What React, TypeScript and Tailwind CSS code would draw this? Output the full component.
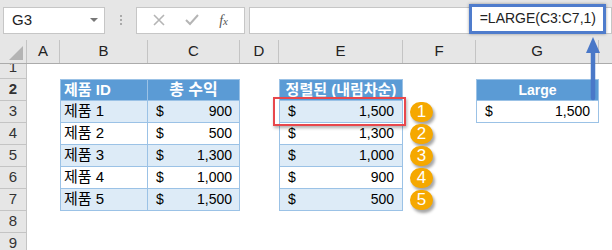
import React from "react";

const COLS = [
  { key: "A", w: "w-[33px]" },
  { key: "B", w: "w-[88px]" },
  { key: "C", w: "w-[92px]" },
  { key: "D", w: "w-[39px]" },
  { key: "E", w: "w-[124px]" },
  { key: "F", w: "w-[73px]" },
  { key: "G", w: "w-[123px]" },
  { key: "", w: "w-[20px]" },
];

const products = [
  { name: "제품 1", rev: "900", sorted: "1,500" },
  { name: "제품 2", rev: "500", sorted: "1,300" },
  { name: "제품 3", rev: "1,300", sorted: "1,000" },
  { name: "제품 4", rev: "1,000", sorted: "900" },
  { name: "제품 5", rev: "1,500", sorted: "500" },
];

const RowHead = ({ n }: { n: number }) => (
  <div className="flex h-full w-[27px] shrink-0 items-center justify-center border-r border-b border-[#c4c4c4] bg-[#e6e6e6] text-[15px] text-[#333]">
    {n}
  </div>
);

const Money = ({ value, fill, cls = "" }: { value: string; fill: boolean; cls?: string }) => (
  <div
    className={`flex h-full items-center justify-between border-r border-b border-[#9bc2e6] pr-[7px] pl-[8px] ${
      fill ? "bg-[#ddebf7]" : "bg-white"
    } ${cls}`}
  >
    <span>$</span>
    <span>{value}</span>
  </div>
);

const Badge = ({ n }: { n: number }) => (
  <div className="absolute top-[1px] left-[7px] flex h-[20px] w-[23px] items-center justify-center rounded-full bg-[#f5a800] text-[17px] text-white shadow-[2px_3px_3px_rgba(0,0,0,0.35)]">
    {n}
  </div>
);

export default function App() {
  return (
    <div className="relative h-[250px] w-[612px] overflow-hidden bg-white font-['Liberation_Sans','Noto_Sans_CJK_KR',sans-serif] text-[14px] text-black">
      {/* formula bar */}
      <div className="flex h-[40px] items-center bg-[#e6e6e6] pl-[3px]">
        <div className="relative flex h-[27px] w-[102px] items-center border border-[#c6c6c6] bg-white pl-[8px] text-[15px] text-[#222]">
          G3
          <span className="absolute top-[10px] right-[6px] h-0 w-0 border-x-[4px] border-t-[4px] border-x-transparent border-t-[#777]" />
        </div>
        <div className="flex w-[31px] flex-col items-center gap-[2px]">
          <span className="h-[2px] w-[2px] bg-[#aaa]" />
          <span className="h-[2px] w-[2px] bg-[#aaa]" />
          <span className="h-[2px] w-[2px] bg-[#aaa]" />
        </div>
        <div className="flex h-[27px] w-[109px] items-center justify-around border border-[#c6c6c6] bg-white px-[6px]">
          <svg width="12" height="12" viewBox="0 0 12 12">
            <path d="M1 1L11 11M11 1L1 11" stroke="#b5b5b5" strokeWidth="1.6" />
          </svg>
          <svg width="14" height="12" viewBox="0 0 14 12">
            <path d="M1 6L5 10L13 1" stroke="#b5b5b5" strokeWidth="2" fill="none" />
          </svg>
          <span className="font-['Liberation_Serif',serif] text-[14px] italic text-[#555]">
            f<span className="text-[11px]">x</span>
          </span>
        </div>
        <div className="relative ml-[4px] h-[27px] flex-1 border border-[#c6c6c6] bg-white">
          <div className="absolute top-[-4px] left-[219px] flex h-[30px] w-[137px] items-center justify-end border-[3px] border-[#4f7ccc] bg-white pr-[7px] text-[14px] text-[#222] shadow-[0_0_3px_rgba(0,0,0,0.35)]">
            =LARGE(C3:C7,1)
          </div>
        </div>
      </div>

      {/* column headers */}
      <div className="flex h-[24px] border-b border-[#ababab] bg-[#e6e6e6] text-[15px] text-[#222]">
        <div className="relative w-[27px] shrink-0 border-r border-[#c4c4c4]">
          <span className="absolute right-[3px] bottom-[3px] h-0 w-0 border-b-[14px] border-l-[14px] border-b-[#b4b4b4] border-l-transparent" />
        </div>
        {COLS.map((c) => (
          <div key={c.key} className={`${c.w} flex shrink-0 items-center justify-center border-r border-[#c4c4c4]`}>
            {c.key}
          </div>
        ))}
      </div>

      {/* row 1 (its top is hidden under the header) */}
      <div className="flex h-[15px] overflow-hidden">
        <div className="mt-[-7px] flex h-[22px] w-[27px] items-center justify-center border-r border-b border-[#c4c4c4] bg-[#e6e6e6] text-[15px] text-[#333]">
          1
        </div>
      </div>

      {/* row 2 : headers */}
      <div className="flex h-[22px] font-bold text-white">
        <RowHead n={2} />
        <div className="w-[33px] shrink-0" />
        <div className="flex w-[88px] shrink-0 items-center border-y border-r border-l border-[#9bc2e6] bg-[#5b9bd5] pl-[3px] text-[15px]">
          제품 ID
        </div>
        <div className="flex w-[92px] shrink-0 items-center justify-center border-y border-r border-[#9bc2e6] bg-[#5b9bd5] text-[16px]">
          총 수익
        </div>
        <div className="w-[39px] shrink-0" />
        <div className="flex w-[124px] shrink-0 items-center justify-center border border-[#9bc2e6] bg-[#5b9bd5] text-[15px]">
          정렬된 (내림차순)
        </div>
        <div className="w-[73px] shrink-0" />
        <div className="flex w-[123px] shrink-0 items-center justify-center border border-[#9bc2e6] bg-[#5b9bd5]">
          Large
        </div>
      </div>

      {/* rows 3-7 */}
      {products.map((p, i) => {
        const fill = i % 2 === 0;
        return (
          <div key={p.name} className="flex h-[22px]">
            <RowHead n={i + 3} />
            <div className="w-[33px] shrink-0" />
            <div
              className={`flex w-[88px] shrink-0 items-center border-r border-b border-l border-[#9bc2e6] pl-[3px] text-[15px] ${
                fill ? "bg-[#ddebf7]" : "bg-white"
              }`}
            >
              {p.name}
            </div>
            <div className="w-[92px] shrink-0">
              <Money value={p.rev} fill={fill} />
            </div>
            <div className="w-[39px] shrink-0" />
            <div className="relative w-[124px] shrink-0">
              <Money value={p.sorted} fill={fill} cls="border-l pr-[8px]" />
              {i === 0 && (
                <div className="absolute top-[-4px] left-[-6px] z-10 h-[29px] w-[133px] border-[2.5px] border-[#e8474c] shadow-[1px_2px_3px_rgba(0,0,0,0.3)]" />
              )}
            </div>
            <div className="relative w-[73px] shrink-0">
              <Badge n={i + 1} />
            </div>
            {i === 0 && (
              <div className="w-[123px] shrink-0">
                <Money value="1,500" fill={false} cls="border-l pr-[8px]" />
              </div>
            )}
          </div>
        );
      })}

      {/* rows 8-9 */}
      {[8, 9].map((n) => (
        <div key={n} className="flex h-[22px]">
          <RowHead n={n} />
        </div>
      ))}

      {/* arrow from G2 up to the formula */}
      <svg className="absolute top-[34px] left-[584px]" width="18" height="68" viewBox="0 0 18 68">
        <path d="M9 14L9 64" stroke="#4a78c8" strokeWidth="4.5" strokeLinecap="round" />
        <path d="M2 19L9 3L16 19Z" fill="#4a78c8" />
      </svg>
    </div>
  );
}
